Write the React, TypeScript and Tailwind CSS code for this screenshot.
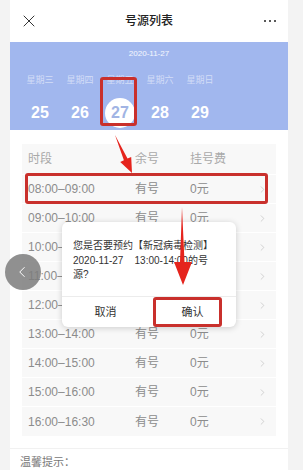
import { ChevronRight, ChevronLeft, X } from "lucide-react";

const days = [
  { week: "星期三", day: "25" },
  { week: "星期四", day: "26" },
  { week: "星期五", day: "27", active: true },
  { week: "星期六", day: "28" },
  { week: "星期日", day: "29" },
];

const slots = [
  "08:00–09:00",
  "09:00–10:00",
  "10:00–11:00",
  "11:00–12:00",
  "12:00–13:00",
  "13:00–14:00",
  "14:00–15:00",
  "15:00–16:00",
  "16:00–16:30",
];

export default function App() {
  return (
    <div className="relative flex h-[470px] w-[303px] overflow-hidden bg-[#f3f3f3] font-['Liberation_Sans','Noto_Sans_CJK_SC',sans-serif]">
      <div className="ml-[10px] flex w-[278px] flex-col bg-white">
        {/* top bar */}
        <div className="flex h-[42px] shrink-0 items-center">
          <div className="flex w-[40px] pl-[9px]">
            <X className="h-[20px] w-[20px] text-[#222]" strokeWidth={1.1} />
          </div>
          <div className="flex-1 text-center text-[12px] font-medium text-[#222]">号源列表</div>
          <div className="flex w-[40px] justify-end gap-[3px] pr-[12px]">
            <span className="h-[2px] w-[2px] rounded-full bg-[#222]" />
            <span className="h-[2px] w-[2px] rounded-full bg-[#222]" />
            <span className="h-[2px] w-[2px] rounded-full bg-[#222]" />
          </div>
        </div>

        {/* date banner */}
        <div className="flex h-[88px] shrink-0 flex-col bg-[#a1b7ee]">
          <div className="pt-[7px] text-center text-[8px] leading-[10px] text-white/90">2020-11-27</div>
          <div className="mt-[16px] flex pl-[10px]">
            {days.map((d) => (
              <div key={d.day} className="flex w-[40px] flex-col items-center">
                <div className="text-[9px] leading-[10px] text-[#d3ddf7]">{d.week}</div>
                {d.active ? (
                  <div className="mt-[13px] flex h-[30px] w-[30px] items-center justify-center rounded-full bg-white text-[16px] font-bold text-[#a1b4e4]">
                    {d.day}
                  </div>
                ) : (
                  <div className="mt-[13px] flex h-[30px] items-center text-[16px] font-bold text-white">{d.day}</div>
                )}
              </div>
            ))}
          </div>
        </div>

        {/* slot table */}
        <div className="px-[12px] pt-[14px]">
          <div className="bg-[#f8f8f8]">
            <div className="flex h-[31px] items-center border-b border-white text-[12px] text-[#a9a9a9]">
              <div className="w-[113px] pl-[6px]">时段</div>
              <div className="w-[55px]">余号</div>
              <div>挂号费</div>
            </div>
            {slots.map((s) => (
              <div key={s} className="flex h-[29px] items-center border-b border-white text-[12px] text-[#8c8c8c] last:border-b-0">
                <div className="w-[113px] pl-[6px]">{s}</div>
                <div className="w-[55px]">有号</div>
                <div className="flex-1">0元</div>
                <ChevronRight className="mr-[8px] h-[11px] w-[11px] text-[#bdbdbd]" strokeWidth={1.4} />
              </div>
            ))}
          </div>
        </div>

        {/* tips */}
        <div className="mt-[12px] border-t border-[#f1f1f1] px-[10px] pt-[6px]">
          <div className="text-[11px] leading-[15px] text-[#777]">温馨提示：</div>
          <div className="text-[11px] leading-[15px] text-[#999]">请按预约时间段前往医院进行核酸检测。</div>
        </div>
      </div>

      {/* annotation: selected day box */}
      <div className="absolute left-[100px] top-[77px] h-[49px] w-[37px] rounded-[3px] border-[3px] border-[#c9302c]" />
      {/* annotation: selected row box */}
      <div className="absolute left-[25px] top-[173px] h-[31px] w-[243px] rounded-[3px] border-[3px] border-[#c9302c]" />

      {/* back button */}
      <div className="absolute left-[5px] top-[254px] flex h-[36px] w-[36px] items-center justify-center rounded-full bg-[#7d7d7d]/85">
        <ChevronLeft className="-ml-[2px] h-[18px] w-[18px] text-white" strokeWidth={1.3} />
      </div>

      {/* confirm dialog */}
      <div className="absolute left-[62px] top-[222px] flex h-[105px] w-[174px] flex-col rounded-[6px] bg-white shadow-[0_1px_6px_rgba(0,0,0,0.18)]">
        <div className="flex-1 px-[11px] pt-[17px] text-[10px] leading-[14.5px] text-[#333]">
          <div>您是否要预约【新冠病毒检测】</div>
          <div>2020-11-27&nbsp;&nbsp;&nbsp;&nbsp;13:00-14:00的号</div>
          <div>源?</div>
        </div>
        <div className="flex h-[31px] items-center border-t border-[#ececec] text-[11px] text-[#333]">
          <div className="flex-1 text-center">取消</div>
          <div className="flex-1 text-center">确认</div>
        </div>
      </div>
      {/* annotation: confirm box */}
      <div className="absolute left-[153px] top-[297px] h-[30px] w-[69px] rounded-[3px] border-[3px] border-[#c9302c]" />

      {/* annotation arrows */}
      <svg className="pointer-events-none absolute left-0 top-0" width="303" height="470" viewBox="0 0 303 470">
        <polygon
          points="115,135 127.5,158.6 131.2,156.9 132,173 120.2,161.9 123.9,160.2"
          fill="#e5241d"
        />
        <polygon points="182,207 184.5,262 192,262 183,285 174,262 180,262" fill="#e5241d" />
      </svg>
    </div>
  );
}
